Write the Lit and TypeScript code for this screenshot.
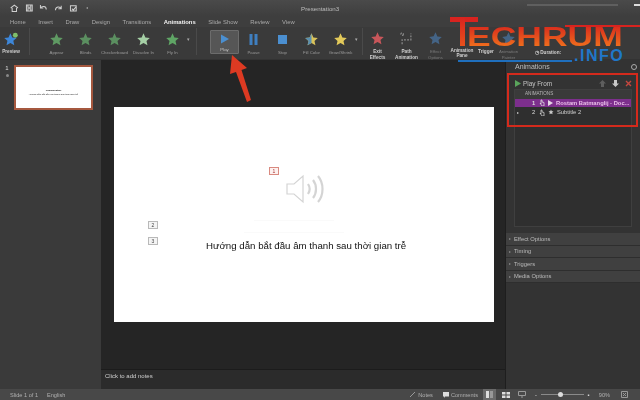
import { LitElement, html, css } from "lit";
import { customElement } from "lit/decorators.js";

const STAR = "M12 2l3 6.6 7 .8-5.2 4.8 1.5 7L12 17.6 5.7 21.2l1.5-7L2 9.4l7-.8z";
const star = (c: string, s = 15) =>
  html`<svg width=${s} height=${s} viewBox="0 0 24 24"><path d=${STAR} fill=${c}></path></svg>`;
const tabs = ["Home", "Insert", "Draw", "Design", "Transitions", "Animations", "Slide Show", "Review", "View"];
const effects = [
  ["Appear", "#5f9a63"], ["Blinds", "#5b8f60"], ["Checkerboard", "#5b8f60"],
  ["Dissolve In", "#a5cfa5"], ["Fly In", "#5fa565"],
];
const playIcon = html`<svg width="13" height="14" viewBox="0 0 13 14"><path d="M3 2.500l8 4.500-8 4.500z" fill="#4b8fd0"></path></svg>`;
const pauseIcon = html`<svg width="13" height="15" viewBox="0 0 13 15"><path d="M2.500 2h3v11h-3zM7.500 2h3v11h-3z" fill="#3f7fc0"></path></svg>`;
const stopIcon = html`<svg width="13" height="15" viewBox="0 0 13 15"><rect x="2" y="3" width="9" height="9" fill="#4b8fd0"></rect></svg>`;
const halfStar = html`<svg width="15" height="15" viewBox="0 0 24 24"><path d=${STAR} fill="#d9c25a"></path><path d="M12 2v15.600L5.700 21.200l1.500-7L2 9.400l7-.8z" fill="#5a8fb0"></path></svg>`;
const pathIcon = html`<svg width="15" height="15" viewBox="0 0 24 24" fill="none" stroke="#8a8a8a" stroke-width="2" stroke-dasharray="3 2"><path d="M5 21V14h14V4"></path><circle cx="5" cy="5" r="2"></circle></svg>`;

@customElement("app-root")
export class AppRoot extends LitElement {
  static styles = css`
    :host { display: block; width: 640px; height: 400px; overflow: hidden; position: relative;
      font-family: "Liberation Sans", Arial, sans-serif; color: #cfcfcf; background: #333; }
    .soft { display: flex; flex-direction: column; width: 640px; height: 400px; filter: blur(0.45px); }
    .title { height: 16px; background: linear-gradient(#4a4a4a, #3e3e3e); display: flex; align-items: center; padding: 0 0 0 10px; gap: 6px; flex: none; position: relative; }
    .title svg { display: block; }
    .doc { margin-left: 203px; font-size: 6.2px; color: #bdbdbd; width: 40px; white-space: nowrap; }
    .search { margin-left: 181px; width: 95px; height: 2px; background: #5f5f5f; margin-top: -6px; }
    .chip { margin-left: 10px; width: 6px; height: 2px; background: #ddd; margin-top: -6px; }
    .tabs { height: 11px; background: #3e3e3e; display: flex; align-items: center; padding-left: 10px; gap: 12.5px; font-size: 5.9px; color: #a9a9a9; flex: none; }
    .tabs span { white-space: nowrap; }
    .tabs .on { color: #f1f1f1; font-weight: bold; }
    .ribbon { height: 33px; background: #3a3a3a; display: flex; flex: none; align-items: stretch; border-bottom: 1px solid #333; box-sizing: border-box; }
    .group { display: flex; align-items: stretch; border-right: 1px solid #4a4a4a; margin: 1px 0 4px; box-sizing: border-box; }
    .g0 { width: 30px; }
    .g1 { width: 167px; padding-left: 12px; }
    .g2 { width: 166px; padding-left: 13px; }
    .rb { width: 29px; display: flex; flex-direction: column; align-items: center; padding-top: 4px; box-sizing: border-box; font-size: 4.3px; line-height: 5.6px; text-align: center; color: #9c9c9c; gap: 3px; white-space: nowrap; flex: none; }
    .rb svg { flex: none; }
    .rb.box { background: #565656; border: 1px solid #6c6c6c; border-radius: 1px; color: #c4c4c4; height: 24px; margin-top: 2px; gap: 1px; padding-top: 1px; }
    .rb.dim { opacity: 0.65; }
    .rb b { color: #d0d0d0; font-size: 4.7px; }
    .prev { width: 22px; gap: 2px; }
    .more { width: 9px; font-size: 5px; color: #aaa; align-self: center; margin-top: -6px; }
    .pane-col { width: 24px; }
    .trig-col { width: 24px; }
    .paint-col { width: 21px; }
    .dur-col { width: 58px; flex-direction: row; justify-content: center; padding-top: 19px; }
    .spacer-ic { height: 15px; display: flex; justify-content: center; align-items: center; }
    .paneic { width: 5px; height: 8px; background: #eee; }
    .main { flex: 1; display: flex; min-height: 0; }
    .side { width: 101px; background: #3a3a3a; display: flex; gap: 4px; padding: 5px 0 0 4px; box-sizing: border-box; flex: none; }
    .sn { display: flex; flex-direction: column; align-items: center; width: 6px; font-size: 6px; color: #ddd; gap: 3px; }
    .sn i { width: 3px; height: 3px; border-radius: 50%; background: #888; }
    .thumb { width: 79px; height: 45px; background: #fff; border: 2px solid #a5583f; box-sizing: border-box; display: flex; flex-direction: column; align-items: center; justify-content: flex-end; padding-bottom: 12px; gap: 1px; color: #222; font-size: 2.4px; white-space: nowrap; }
    .thumb b { font-size: 2.4px; }
    .center { width: 405px; background: #252525; display: flex; flex-direction: column; flex: none; border-right: 1px solid #1e1e1e; box-sizing: border-box; }
    .stage { height: 310px; padding: 47px 0 0 13px; box-sizing: border-box; flex: none; border-bottom: 1px solid #1c1c1c; }
    .slide { width: 380px; height: 215px; background: #fff; position: relative; color: #111; }
    .tag { position: absolute; width: 10px; height: 8px; border: 1px solid #b9b9b9; box-sizing: border-box; font-size: 5px; line-height: 6px; text-align: center; color: #444; background: #f4f4f4; }
    .tag.red { border-color: #d98a80; background: #fdf1ef; color: #a33; }
    .speaker { position: absolute; left: 171px; top: 66px; }
    .faint { position: absolute; height: 1px; background: #fafafa; }
    .caption { position: absolute; left: 92px; top: 133px; font-size: 9.7px; white-space: nowrap; color: #111; }
    .notes { flex: 1; background: #2b2b2b; font-size: 6px; color: #cfcfcf; padding: 3px 0 0 4px; }
    .panel { flex: 1; background: #333; display: flex; flex-direction: column; min-width: 0; }
    .phead { height: 13px; display: flex; align-items: center; justify-content: space-between; padding: 0 3px 0 9px; font-size: 7px; color: #bdbdbd; flex: none; }
    .gear { width: 6px; height: 6px; border-radius: 50%; background: #333; border: 1.5px solid #aaa; box-sizing: border-box; }
    .pane { height: 160px; padding: 4px 8px 0 8px; flex: none; box-sizing: border-box; }
    .pf { display: flex; align-items: center; height: 12px; font-size: 6.4px; color: #c4c4c4; gap: 2px; margin-left: 1px; }
    .pf .acts { margin-left: auto; display: flex; gap: 6px; align-items: center; }
    .list { border: 1px solid #3f3f3f; height: 138px; background: #2f2f2f; font-size: 5.8px; box-sizing: border-box; }
    .lh { height: 9px; background: #3a3a3a; font-size: 4.6px; line-height: 8px; padding-left: 10px; color: #b5b5b5; }
    .row { height: 7.500px; display: flex; align-items: center; white-space: nowrap; }
    .row.sel { background: #7d2f8d; color: #eabfe9; font-weight: bold; }
    .row + .row { margin-top: 2px; }
    .row .tri { width: 17px; padding-left: 2px; box-sizing: border-box; font-size: 4px; color: #ccc; }
    .row .n { width: 7px; color: #ddd; }
    .row svg { margin-right: 3px; flex: none; }
    .sect { height: 11.500px; background: #404040; border-bottom: 0.5px solid #2e2e2e; display: flex; align-items: center; font-size: 5.8px; color: #bcbcbc; padding-left: 3px; gap: 3px; flex: none; }
    .sect i { font-style: normal; font-size: 4px; color: #888; }
    .status { height: 11px; background: #484848; flex: none; display: flex; align-items: center; font-size: 5.6px; color: #b0b0b0; padding: 0 12px 0 10px; white-space: nowrap; }
    .status .lang { margin-left: 9px; }
    .status .r { margin-left: auto; display: flex; align-items: center; }
    .status .r > * { flex: none; }
    .nt { margin: 0 10px 0 2px; }
    .cm { margin: 0 1px 0 2px; }
    .view { width: 13px; height: 11px; background: #6a6a6a; display: flex; align-items: center; justify-content: center; margin: 0 6px 0 4px; }
    .sorter { margin-right: 8px; }
    .reading { margin-right: 9px; }
    .zoom { width: 43px; height: 1.500px; background: #8a8a8a; position: relative; margin: 0 4px; }
    .zoom::after { content: ""; position: absolute; left: 17px; top: -2px; width: 5px; height: 5px; border-radius: 50%; background: #ddd; }
    .zm { color: #ddd; }
    .plus { color: #ddd; margin-right: 9px; }
    .pct { margin-right: 11px; }
    .callout { position: absolute; left: 507px; top: 73px; width: 131px; height: 54px; border: 2px solid #d42a1c; box-sizing: border-box; }
    .arrow { position: absolute; left: 222px; top: 52px; }
    .logo { position: absolute; left: 445px; top: 14px; width: 195px; height: 52px; pointer-events: none; }
    .lg-bar { position: absolute; left: 5px; top: 3px; width: 28px; height: 5px; background: #d8231f; }
    .lg-stem { position: absolute; left: 15px; top: 3px; width: 5px; height: 29px; background: linear-gradient(#d8231f, #e8511c); }
    .lg-line { position: absolute; left: 120px; top: 11px; width: 75px; height: 2px; background: #d8231f; }
    .lg-text { position: absolute; left: 22px; top: 12px; font-size: 27.500px; line-height: 21px; font-weight: bold; white-space: nowrap; background: linear-gradient(#d92b1d, #f0701d); -webkit-background-clip: text; background-clip: text; color: transparent; transform: scaleX(1.29); transform-origin: left; }
    .lg-under { position: absolute; left: 13px; top: 45.500px; width: 114px; height: 2px; background: #1f6fbd; }
    .lg-info { position: absolute; left: 129px; top: 34px; font-size: 16px; line-height: 15px; letter-spacing: 1.500px; white-space: nowrap; color: #1f77c9; font-weight: bold; }
  `;

  private tb(d: string, w = 10) {
    return html`<svg width=${w} height="10" viewBox="0 0 12 12" fill="none" stroke="#cfcfcf" stroke-width="1.400"><path d=${d}></path></svg>`;
  }

  render() {
    return html`
      <div class="soft">
        <div class="title">
          ${this.tb("M1 6l5-4 5 4M3 6v5h6V6", 9)}
          ${this.tb("M2 2h8v8H2zM4 2v3h4V2M4 10V7h4v3", 9)}
          ${this.tb("M2 2v4h4M2 6c2-3 8-3 8 2", 9)}
          ${this.tb("M10 3v4H6M10 7c-2-4-8-3-8 2", 9)}
          ${this.tb("M2 3h8v7H2zM4 7l2 2 4-5", 9)}
          ${this.tb("M5 6h2", 9)}
          <span class="doc">Presentation3</span>
          <span class="search"></span>
          <span class="chip"></span>
        </div>
        <div class="tabs">${tabs.map((t) => html`<span class=${t === "Animations" ? "on" : ""}>${t}</span>`)}</div>
        <div class="ribbon">
          <div class="group g0">
            <div class="rb prev">
              <svg width="16" height="15" viewBox="0 0 26 24"><path d=${STAR} fill="#3d86d8"></path><circle cx="20" cy="5" r="4" fill="#7fbf6a"></circle></svg>
              <b>Preview</b>
            </div>
          </div>
          <div class="group g1">
            ${effects.map(([n, c]) => html`<div class="rb">${star(c)}${n}</div>`)}
            <span class="more">▾</span>
          </div>
          <div class="group g2">
            <div class="rb box">${playIcon}Play</div>
            <div class="rb">${pauseIcon}Pause</div>
            <div class="rb">${stopIcon}Stop</div>
            <div class="rb">${halfStar}Fill Color</div>
            <div class="rb">${star("#e2c95a")}Grow/Shrink</div>
            <span class="more">▾</span>
          </div>
          <div class="rb">${star("#c8565a")}<b>Exit<br />Effects</b></div>
          <div class="rb">${pathIcon}<b>Path<br />Animation</b></div>
          <div class="rb dim">${star("#4a7bb0")}Effect<br />Options</div>
          <div class="rb pane-col"><span class="spacer-ic"><i class="paneic"></i></span><b>Animation<br />Pane</b></div>
          <div class="rb trig-col"><span class="spacer-ic"></span><b>Trigger</b></div>
          <div class="rb dim paint-col">${star("#4a7bb0")}Animation<br />Painter</div>
          <div class="rb dur-col"><b>◷ Duration:</b></div>
        </div>
        <div class="main">
          <div class="side">
            <div class="sn"><span>1</span><i></i></div>
            <div class="thumb"><b>Thuhoạchthư</b><span>Hướng dẫn bắt đầu âm thanh sau thời gian trễ</span></div>
          </div>
          <div class="center">
            <div class="stage">
              <div class="slide">
                <div class="tag red" style="left:155px;top:60px">1</div>
                <svg class="speaker" width="40" height="32" viewBox="0 0 40 32" fill="none" stroke="#d4d4d4" stroke-width="2">
                  <path d="M2 11h7l9-8v26l-9-8H2z" stroke-width="1.200"></path>
                  <path d="M23 11c2 3 2 7 0 10M28 7c4 5 4 13 0 18M33 3c6 7 6 19 0 26" stroke-width="2.200"></path>
                </svg>
                <div class="faint" style="left:140px;top:113px;width:80px"></div>
                <div class="faint" style="left:130px;top:125px;width:100px"></div>
                <div class="tag" style="left:34px;top:114px">2</div>
                <div class="tag" style="left:34px;top:130px">3</div>
                <div class="caption">Hướng dẫn bắt đầu âm thanh sau thời gian trễ</div>
              </div>
            </div>
            <div class="notes">Click to add notes</div>
          </div>
          <div class="panel">
            <div class="phead"><span>Animations</span><span class="gear"></span></div>
            <div class="pane">
              <div class="pf">
                <svg width="6" height="7" viewBox="0 0 6 7"><path d="M0 0l6 3.500L0 7z" fill="#5aa55c"></path></svg>
                Play From
                <span class="acts">
                  <svg width="7" height="7" viewBox="0 0 7 7"><path d="M3.500 0L7 3.500H5V7H2V3.500H0z" fill="#5e5e5e"></path></svg>
                  <svg width="7" height="7" viewBox="0 0 7 7"><path d="M3.500 7L7 3.500H5V0H2v3.500H0z" fill="#c8c8c8"></path></svg>
                  <svg width="7" height="7" viewBox="0 0 7 7"><path d="M1 1l5 5M6 1L1 6" stroke="#c4473f" stroke-width="1.400"></path></svg>
                </span>
              </div>
              <div class="list">
                <div class="lh">ANIMATIONS</div>
                <div class="row sel"><span class="tri"></span><span class="n">1</span>
                  <svg width="6" height="7" viewBox="0 0 6 7" fill="none" stroke="#ddd" stroke-width=".8"><path d="M2 1v4l-1-1 2 3h2V3.500L3 3V1z"></path></svg>
                  <svg width="5" height="6" viewBox="0 0 5 6"><path d="M0 0l5 3-5 3z" fill="#e5d5e5"></path></svg>
                  Rostam Batmanglij - Doc...</div>
                <div class="row"><span class="tri">▸</span><span class="n">2</span>
                  <svg width="6" height="7" viewBox="0 0 6 7" fill="none" stroke="#ccc" stroke-width=".8"><path d="M2 1v4l-1-1 2 3h2V3.500L3 3V1z"></path></svg>
                  <svg width="6" height="6" viewBox="0 0 24 24"><path d=${STAR} fill="#ccc"></path></svg>
                  Subtitle 2</div>
              </div>
            </div>
            ${["Effect Options", "Timing", "Triggers", "Media Options"].map((s) => html`<div class="sect"><i>▸</i>${s}</div>`)}
          </div>
        </div>
        <div class="status">
          <span>Slide 1 of 1</span><span class="lang">English</span>
          <span class="r">
            <svg width="7" height="7" viewBox="0 0 7 7" fill="none" stroke="#999"><path d="M1 6l3-3 2-2"></path></svg>
            <span class="nt">Notes</span>
            <svg width="6" height="6" viewBox="0 0 6 6"><path d="M0 0h6v4.500H2L1 6V4.500H0z" fill="#ddd"></path></svg>
            <span class="cm">Comments</span>
            <span class="view"><svg width="7" height="7" viewBox="0 0 7 7"><path d="M0 0h3v7H0z" fill="#ddd"></path><path d="M4 0h3v7H4z" fill="#999"></path></svg></span>
            <svg class="sorter" width="8" height="6" viewBox="0 0 8 6"><path d="M0 0h3.500v2.500H0zM4.500 0H8v2.500H4.500zM0 3.500h3.500V6H0zM4.500 3.500H8V6H4.500z" fill="#ddd"></path></svg>
            <svg class="reading" width="8" height="7" viewBox="0 0 8 7" fill="none" stroke="#999"><path d="M.5.500h7v4h-7zM4 4.500V7"></path></svg>
            <span class="zm">-</span>
            <span class="zoom"></span>
            <span class="plus">▪</span>
            <span class="pct">90%</span>
            <svg width="7" height="7" viewBox="0 0 7 7" fill="none" stroke="#999"><path d="M.5.500h6v6h-6zM2 2l3 3M5 2L2 5"></path></svg>
          </span>
        </div>
      </div>
      <div class="callout"></div>
      <svg class="arrow" width="32" height="54" viewBox="0 0 32 54">
        <path d="M10 3L25 16L19.500 18L29 48L25 50L14 20L8 22z" fill="#dd3a22"></path>
      </svg>
      <div class="logo">
        <div class="lg-bar"></div><div class="lg-line"></div><div class="lg-stem"></div>
        <div class="lg-text">ECHRUM</div>
        <div class="lg-under"></div>
        <div class="lg-info">.INFO</div>
      </div>
    `;
  }
}
